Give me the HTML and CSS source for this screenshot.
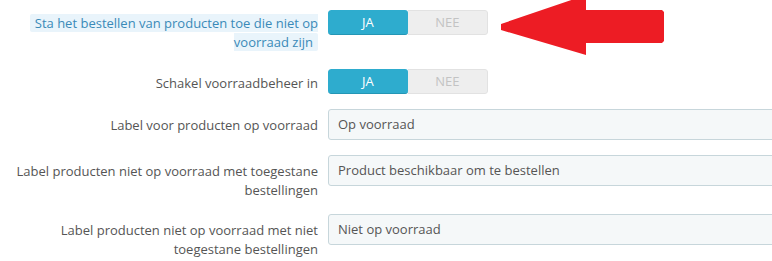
FILE: index.html
```html
<!DOCTYPE html>
<html lang="nl">
<head>
<meta charset="utf-8">
<title>Voorraad instellingen</title>
<link rel="stylesheet" href="styles.css">
</head>
<body>
<form class="form">
  <div class="row row--switch row--first">
    <label class="label"><span class="hint">Sta het bestellen van producten toe die niet op voorraad zijn</span></label>
    <div class="control">
      <div class="switch"><span class="switch__on">JA</span><span class="switch__off">NEE</span></div>
    </div>
  </div>
  <div class="row row--switch">
    <label class="label">Schakel voorraadbeheer in</label>
    <div class="control">
      <div class="switch"><span class="switch__on">JA</span><span class="switch__off">NEE</span></div>
    </div>
  </div>
  <div class="row">
    <label class="label">Label voor producten op voorraad</label>
    <div class="control control--clip"><div class="input">Op voorraad</div></div>
  </div>
  <div class="row">
    <label class="label">Label producten niet op voorraad met toegestane bestellingen</label>
    <div class="control control--clip"><div class="input">Product beschikbaar om te bestellen</div></div>
  </div>
  <div class="row">
    <label class="label">Label producten niet op voorraad met niet toegestane bestellingen</label>
    <div class="control control--clip"><div class="input">Niet op voorraad</div></div>
  </div>
</form>
<svg class="arrow" width="172" height="58" viewBox="498 -2 172 58" aria-hidden="true">
  <polygon points="501,24 586,-5 586,10 662,10 664,12 664,41 662,43 586,43 586,55 501,30" fill="#ed1c24"/>
</svg>
</body>
</html>
```
FILE: styles.css
```css
html, body {
  margin: 0;
  padding: 0;
  background: #ffffff;
  overflow: hidden;
}
body {
  font-family: "Open Sans", "DejaVu Sans", sans-serif;
  font-size: 13px;
  line-height: 1.42857;
  color: #555555;
  width: 772px;
  height: 261px;
  position: relative;
}
.form {
  padding-top: 10px;
}
.row {
  display: grid;
  grid-template-columns: 305px 1fr;
  column-gap: 10px;
  padding-left: 13px;
  margin-bottom: 15px;
}
.row--first {
  margin-bottom: 18px;
}
.label {
  text-align: right;
  padding-top: 7px;
}
.row--switch .label {
  padding-top: 4px;
}
.row--switch + .row--switch .label {
  padding-top: 5px;
}
.hint {
  background: #e9f4fb;
  color: #3a8ab8;
  padding: 0 5px;
  border-radius: 2px;
}
.control {
  min-width: 0;
}
.control--clip {
  overflow: hidden;
}
.switch {
  display: flex;
  width: 160px;
  height: 25px;
  border-radius: 3px;
  overflow: hidden;
}
.switch__on,
.switch__off {
  flex: 1;
  display: flex;
  align-items: center;
  justify-content: center;
  font-size: 13px;
}
.switch__on {
  background: #2eacce;
  color: #ffffff;
  border-bottom: 1px solid #2496b5;
  border-radius: 3px;
}
.switch__off {
  background: #eeeeee;
  color: #c3c3c3;
  border: 1px solid #e2e2e2;
  border-left: 0;
  border-radius: 0 3px 3px 0;
}
.input {
  width: calc(100% + 6px);
  height: 31px;
  box-sizing: border-box;
  background: #f5f8f9;
  border: 1px solid #c7d6db;
  border-radius: 3px;
  padding: 0 9px;
  display: flex;
  align-items: center;
  color: #555555;
}
.arrow {
  position: absolute;
  left: 498px;
  top: -2px;
}
```
